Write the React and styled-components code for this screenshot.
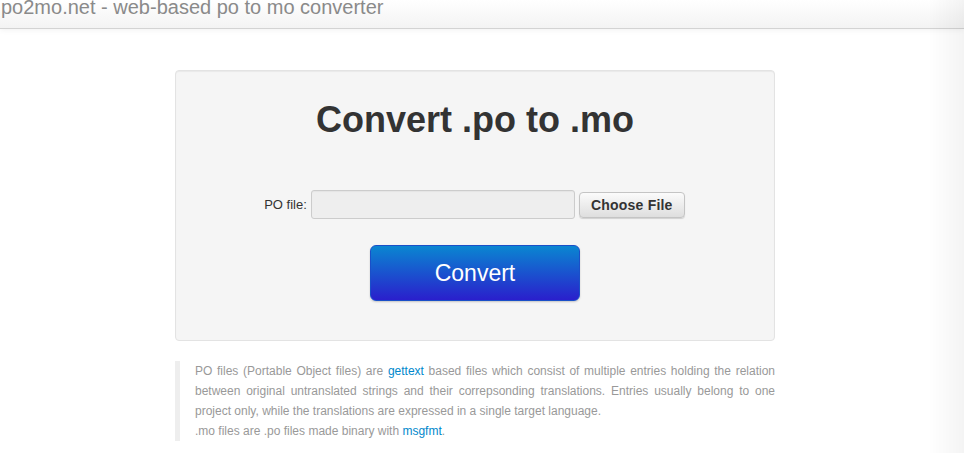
import React from "react";
import styled, { createGlobalStyle } from "styled-components";

const GlobalStyle = createGlobalStyle`
  html, body {
    margin: 0;
    padding: 0;
    background: #fff;
    font-family: "Liberation Sans", Arial, Helvetica, sans-serif;
  }
  * { box-sizing: border-box; }
`;

const Header = styled.header`
  height: 29px;
  background: linear-gradient(to bottom, #ffffff, #f3f3f3);
  border-bottom: 1px solid #d3d3d3;
  box-shadow: 0 1px 6px rgba(0, 0, 0, 0.06);
`;

const Brand = styled.div`
  font-size: 20px;
  line-height: 14px;
  color: #8a8a8a;
  padding-left: 1px;
  white-space: nowrap;
`;

const Main = styled.main`
  padding: 41px 14px 0 0;
`;

const Container = styled.div`
  width: 600px;
  margin: 0 auto;
`;

const Well = styled.section`
  background: #f5f5f5;
  border: 1px solid #e3e3e3;
  border-radius: 4px;
  box-shadow: inset 0 1px 1px rgba(0, 0, 0, 0.05);
  padding: 29px 0 39px;
  display: flex;
  flex-direction: column;
  align-items: center;
`;

const Title = styled.h1`
  margin: 0;
  font-size: 36px;
  line-height: 40px;
  font-weight: bold;
  color: #333;
`;

const FileRow = styled.div`
  margin-top: 50px;
  display: flex;
  align-items: center;
  gap: 4px;
  padding-right: 1px;
`;

const Label = styled.label`
  font-size: 13px;
  color: #333;
`;

const FileBox = styled.div`
  width: 264px;
  height: 29px;
  background: #eeeeee;
  border: 1px solid #cccccc;
  border-radius: 3px;
  box-shadow: inset 0 1px 1px rgba(0, 0, 0, 0.04);
`;

const ChooseButton = styled.button`
  width: 106px;
  height: 26px;
  padding: 0;
  font-family: inherit;
  font-size: 14px;
  letter-spacing: 0.2px;
  font-weight: bold;
  color: #333;
  background: linear-gradient(to bottom, #fbfbfb, #dedede);
  border: 1px solid #c4c4c4;
  border-radius: 4px;
  box-shadow: 0 1px 1px rgba(0, 0, 0, 0.15);
`;

const ConvertButton = styled.button`
  margin-top: 26px;
  width: 210px;
  height: 56px;
  font-family: inherit;
  font-size: 23px;
  color: #fff;
  background: linear-gradient(to bottom, #0a86d1, #2a1fcc);
  border: 1px solid #1a4fc8;
  border-radius: 6px;
  box-shadow: 0 1px 2px rgba(0, 0, 0, 0.2);
`;

const Note = styled.blockquote`
  margin: 20px 0 0;
  padding: 0 0 0 15px;
  border-left: 5px solid #eeeeee;
  font-size: 12px;
  line-height: 20px;
  color: #999;
  text-align: justify;

  p { margin: 0; }
  a {
    color: #0088cc;
    text-decoration: none;
  }
`;

const EdgeShade = styled.div`
  position: fixed;
  top: 0;
  right: 0;
  bottom: 0;
  width: 36px;
  pointer-events: none;
  background: linear-gradient(to right, rgba(0, 0, 0, 0), rgba(0, 0, 0, 0.045));
`;

export default function App() {
  return (
    <>
      <GlobalStyle />
      <Header>
        <Brand>po2mo.net - web-based po to mo converter</Brand>
      </Header>
      <Main>
        <Container>
          <Well>
            <Title>Convert .po to .mo</Title>
            <FileRow>
              <Label>PO file:</Label>
              <FileBox />
              <ChooseButton>Choose File</ChooseButton>
            </FileRow>
            <ConvertButton>Convert</ConvertButton>
          </Well>
          <Note>
            <p>
              PO files (Portable Object files) are <a href="#">gettext</a> based files which
              consist of multiple entries holding the relation between original untranslated
              strings and their correpsonding translations. Entries usually belong to one
              project only, while the translations are expressed in a single target language.
            </p>
            <p>
              .mo files are .po files made binary with <a href="#">msgfmt</a>.
            </p>
          </Note>
        </Container>
      </Main>
      <EdgeShade />
    </>
  );
}
